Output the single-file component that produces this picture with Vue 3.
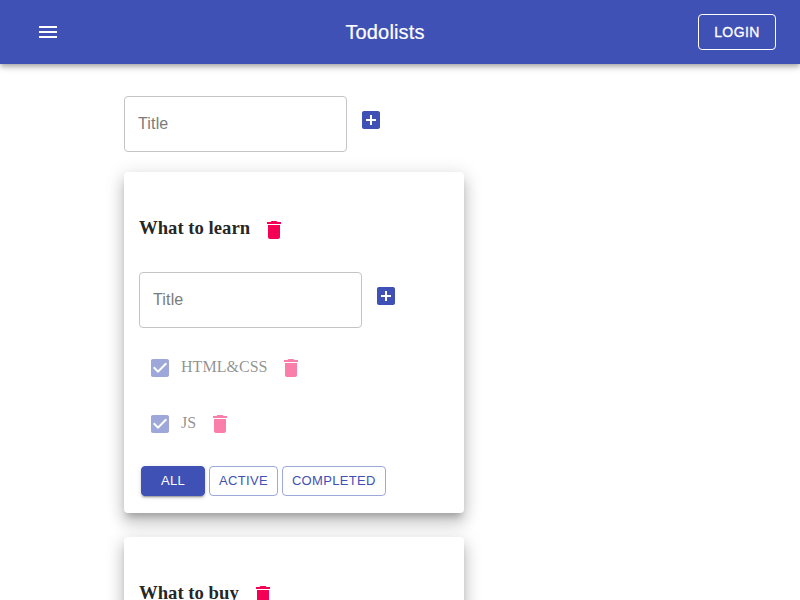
<script setup>
import { ref } from 'vue'

const icons = {
  menu: 'M3 18h18v-2H3v2zm0-5h18v-2H3v2zm0-7v2h18V6H3z',
  add: 'M19 3H5c-1.11 0-2 .9-2 2v14c0 1.1.89 2 2 2h14c1.1 0 2-.9 2-2V5c0-1.1-.9-2-2-2zm-2 10h-4v4h-2v-4H7v-2h4V7h2v4h4v2z',
  trash: 'M6 19c0 1.1.9 2 2 2h8c1.1 0 2-.9 2-2V7H6v12zM19 4h-3.5l-1-1h-5l-1 1H5v2h14V4z',
  check: 'M19 3H5c-1.11 0-2 .9-2 2v14c0 1.1.89 2 2 2h14c1.11 0 2-.9 2-2V5c0-1.1-.89-2-2-2zm-9 14l-5-5 1.41-1.41L10 14.17l7.59-7.59L19 8l-9 9z'
}

const filters = ['All', 'Active', 'Completed']
const lists = ref([
  { title: 'What to learn', filter: 'All', tasks: ['HTML&CSS', 'JS'] },
  { title: 'What to buy', filter: 'All', tasks: ['Milk', 'Book'] }
])
</script>

<template>
  <div class="page">
    <header class="bar">
      <button class="icon-btn menu"><svg viewBox="0 0 24 24"><path :d="icons.menu" /></svg></button>
      <h6 class="brand">Todolists</h6>
      <button class="login">Login</button>
    </header>
    <main class="content">
      <div class="add-form">
        <input class="field" placeholder="Title" />
        <button class="icon-btn primary"><svg viewBox="0 0 24 24"><path :d="icons.add" /></svg></button>
      </div>
      <section v-for="list in lists" :key="list.title" class="card">
        <h3 class="heading">
          <span>{{ list.title }}</span>
          <button class="icon-btn secondary"><svg viewBox="0 0 24 24"><path :d="icons.trash" /></svg></button>
        </h3>
        <div class="add-form">
          <input class="field" placeholder="Title" />
          <button class="icon-btn primary"><svg viewBox="0 0 24 24"><path :d="icons.add" /></svg></button>
        </div>
        <ul class="tasks">
          <li v-for="task in list.tasks" :key="task" class="task">
            <button class="icon-btn small primary"><svg viewBox="0 0 24 24"><path :d="icons.check" /></svg></button>
            <span class="task-name">{{ task }}</span>
            <button class="icon-btn secondary"><svg viewBox="0 0 24 24"><path :d="icons.trash" /></svg></button>
          </li>
        </ul>
        <div class="filters">
          <button
            v-for="f in filters"
            :key="f"
            class="filter"
            :class="{ active: list.filter === f }"
            @click="list.filter = f"
          >{{ f }}</button>
        </div>
      </section>
    </main>
  </div>
</template>

<style>
body {
  overflow: hidden;
  background: #fff;
}
</style>

<style scoped>
* {
  box-sizing: border-box;
}
.page {
  height: 600px;
  overflow: hidden;
  color: rgba(0, 0, 0, 0.87);
  font-family: "Liberation Serif", "Times New Roman", serif;
}
button {
  margin: 0;
  cursor: pointer;
}
.bar {
  position: relative;
  display: flex;
  align-items: center;
  justify-content: space-between;
  height: 64px;
  padding: 0 24px;
  background: #3f51b5;
  color: #fff;
  font-family: "Liberation Sans", Arial, sans-serif;
  box-shadow: 0 2px 4px -1px rgba(0, 0, 0, 0.2), 0 4px 5px 0 rgba(0, 0, 0, 0.14), 0 1px 10px 0 rgba(0, 0, 0, 0.12);
}
.brand {
  margin: 0;
  font-size: 20px;
  font-weight: 400;
  line-height: 32px;
  letter-spacing: 0.15px;
  -webkit-text-stroke: 0.2px currentColor;
}
.login {
  width: 78px;
  height: 36px;
  padding: 0;
  border: 1px solid #fff;
  border-radius: 4px;
  background: none;
  color: #fff;
  font: 400 14px/24px "Liberation Sans", Arial, sans-serif;
  letter-spacing: 0.4px;
  text-transform: uppercase;
  -webkit-text-stroke: 0.3px currentColor;
}
.icon-btn {
  flex: none;
  display: flex;
  padding: 12px;
  border: 0;
  background: none;
}
.icon-btn.small {
  padding: 9px;
}
.icon-btn svg {
  width: 24px;
  height: 24px;
  fill: currentColor;
}
.menu {
  color: #fff;
}
.primary {
  color: #3f51b5;
}
.secondary {
  color: #f50057;
}
.content {
  padding: 32px 124px 0;
}
.add-form {
  display: flex;
  align-items: flex-start;
}
.field {
  width: 223px;
  height: 56px;
  padding: 0 13px;
  border: 1px solid #c4c4c4;
  border-radius: 4px;
  outline: 0;
  background: none;
  font: 16px "Liberation Sans", Arial, sans-serif;
  letter-spacing: 0.15px;
}
.field::placeholder {
  color: #7b7b7b;
  opacity: 1;
}
.card {
  width: 340px;
  height: 341px;
  margin: 20px 0 24px;
  padding: 34px 15px 0;
  border-radius: 4px;
  background: #fff;
  box-shadow: 0 6px 6px -3px rgba(0, 0, 0, 0.2), 0 10px 14px 1px rgba(0, 0, 0, 0.14), 0 4px 18px 3px rgba(0, 0, 0, 0.12);
}
.card + .card {
  margin-top: 0;
}
.heading {
  display: flex;
  align-items: center;
  margin: 0 0 18px;
  font-size: 18.72px;
  line-height: 27px;
  letter-spacing: 0;
}
.heading span {
  padding-bottom: 6px;
}
.tasks {
  display: flex;
  flex-direction: column;
  gap: 8px;
  margin: 16px 0 18px;
  padding: 0;
  list-style: none;
}
.task {
  display: flex;
  align-items: center;
  opacity: 0.5;
}
.task-name {
  padding-bottom: 4px;
  font-size: 16px;
  line-height: 23px;
  letter-spacing: 0.03px;
}
.filters {
  display: flex;
  gap: 4px;
  padding-left: 2px;
}
.filter {
  min-width: 64px;
  height: 30px;
  padding: 0 9px 1px;
  border: 1px solid rgba(63, 81, 181, 0.5);
  border-radius: 4px;
  background: none;
  color: #3f51b5;
  font: 13px/22px "Liberation Sans", Arial, sans-serif;
  letter-spacing: 0.32px;
  text-transform: uppercase;
}
.filter.active {
  border-color: #3f51b5;
  background: #3f51b5;
  color: #fff;
  box-shadow: 0 3px 1px -2px rgba(0, 0, 0, 0.2), 0 2px 2px 0 rgba(0, 0, 0, 0.14), 0 1px 5px 0 rgba(0, 0, 0, 0.12);
}
</style>
